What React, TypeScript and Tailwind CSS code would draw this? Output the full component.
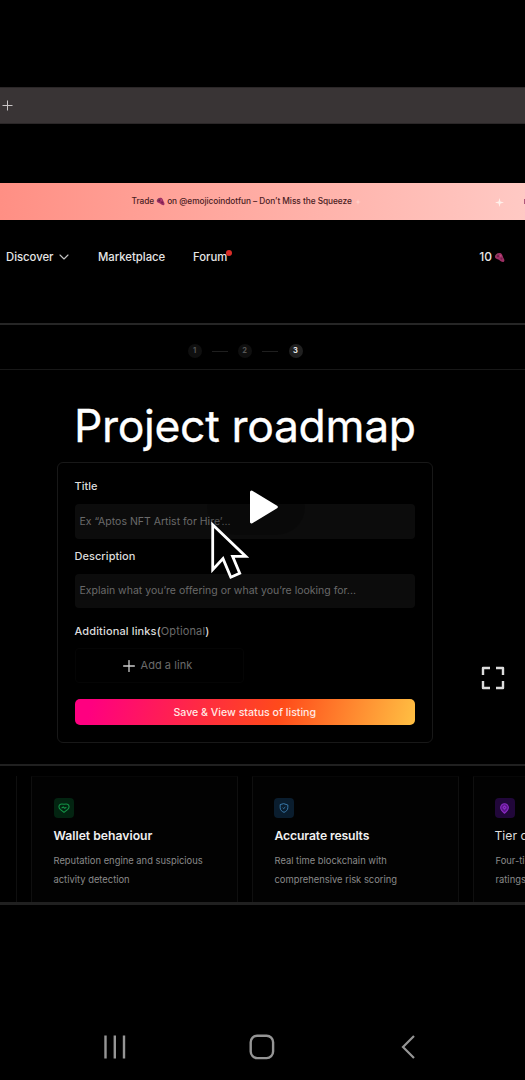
import React from "react";

function Berry({ className }: { className?: string }) {
  return (
    <svg viewBox="0 0 10 10" className={className} aria-hidden="true">
      <path d="M0.8 4.2 C1.5 1.5 4 0.3 6.3 1.2 C7.6 2 7.8 4 9 6.2 C10 8 9.3 9.2 8 9.1 C5.8 8.8 5.2 7 3.2 6.6 C1.8 6.3 0.8 5.5 0.8 4.2Z" fill="#9c2f63" />
      <circle cx="3.6" cy="3.8" r="1" fill="#6e1b48" />
      <circle cx="6" cy="3.4" r="0.9" fill="#c0487f" />
      <circle cx="6.8" cy="6" r="1" fill="#771c4d" />
      <path d="M0.8 3.8 L2.2 2.4 L3.2 1 L3 3Z" fill="#665a52" />
    </svg>
  );
}

function Sparkle({ className }: { className?: string }) {
  return (
    <svg viewBox="0 0 10 10" className={className} aria-hidden="true">
      <path d="M5 0 L6 4 L10 5 L6 6 L5 10 L4 6 L0 5 L4 4Z" fill="#fff0ea" />
    </svg>
  );
}

function Step({ n, active }: { n: number; active?: boolean }) {
  return (
    <span
      className={
        active
          ? "flex h-[14px] w-[14px] shrink-0 items-center justify-center rounded-full bg-[#202020] text-[7.5px] font-bold text-[#e5e5e5]"
          : "flex h-[14px] w-[14px] shrink-0 items-center justify-center rounded-full bg-[#0f0f0f] text-[7.5px] font-bold text-[#555555]"
      }
    >
      {n}
    </span>
  );
}

function HeartIcon() {
  return (
    <svg viewBox="0 0 12 12" className="h-3 w-3" fill="none" stroke="#149447" strokeWidth="1.1" strokeLinejoin="round" strokeLinecap="round">
      <path d="M6 10.4 L2.2 7.4 C0.4 5.9 0.5 3 2.5 2.2 C3.3 1.8 4.3 1.9 6 2.2 C7.7 1.9 8.7 1.8 9.5 2.2 C11.5 3 11.6 5.9 9.8 7.4Z" />
      <path d="M4 5.8 L5.3 5 L6.7 6.3 L8 5.6" />
    </svg>
  );
}

function ShieldIcon() {
  return (
    <svg viewBox="0 0 12 12" className="h-[10px] w-[10px]" fill="none" stroke="#3978a8" strokeWidth="1.2" strokeLinejoin="round" strokeLinecap="round">
      <path d="M6 0.9 L10.6 2.4 V5.6 C10.6 8.3 8.5 10.3 6 11.2 C3.5 10.3 1.4 8.3 1.4 5.6 V2.4Z" />
      <path d="M4.8 6 L5.6 6.7 L7.2 5.2" />
    </svg>
  );
}

function PinIcon() {
  return (
    <svg viewBox="0 0 12 12" className="h-[11px] w-[11px]" fill="none" stroke="#8a2bc2" strokeWidth="1.2" strokeLinejoin="round">
      <path d="M6 11.2 C3.6 9.3 1.8 7.4 1.8 5 A4.2 4.2 0 0 1 10.2 5 C10.2 7.4 8.4 9.3 6 11.2Z" fill="#5b168a" />
      <path d="M6 3.2 L7.6 4.8 L6 6.8 L4.4 4.8Z" />
    </svg>
  );
}

type FeatureProps = {
  icon: React.ReactNode;
  iconClass: string;
  title: string;
  titleClass: string;
  lines: [string, string];
};

function Feature({ icon, iconClass, title, titleClass, lines }: FeatureProps) {
  return (
    <article className="flex h-[126px] w-[207px] shrink-0 flex-col border border-b-0 border-[#0f0f0f] border-t-[#070707] bg-[#020202] pt-[21px] pl-[21.5px]">
      <div className={iconClass}>{icon}</div>
      <h3 className={titleClass}>{title}</h3>
      <p className="flex flex-col items-start pt-[5px] text-[9.4px] leading-[19px] whitespace-nowrap text-[#8a8a8a]">
        <span>{lines[0]}</span>
        <span>{lines[1]}</span>
      </p>
    </article>
  );
}

export default function App() {
  return (
    <div className="flex h-[1080px] w-[525px] flex-col overflow-hidden bg-black font-['Inter',sans-serif] text-white">
      <div className="h-[87px] shrink-0" />
      <div className="flex h-[37px] shrink-0 items-center border-y border-[#2b2728] bg-[#393435] pl-[2px]">
        <svg viewBox="0 0 11 11" className="h-[11px] w-[11px]" stroke="#c9c5c6" strokeWidth="1">
          <path d="M5.5 0.5 V10.5 M0.5 5.5 H10.5" />
        </svg>
      </div>
      <div className="h-[59px] shrink-0" />

      <div className="flex h-[37px] shrink-0 items-center bg-linear-to-r from-[#ff8f84] to-[#ffc9c4] text-[8.3px] font-medium tracking-[-0.005em] text-[#4b2023]">
        <div className="flex w-full items-center pl-[131.5px] whitespace-nowrap">
          <span>Trade</span>
          <Berry className="ml-[2px] h-[9px] w-[9px]" />
          <span className="ml-[2px]">on @emojicoindotfun – Don’t Miss the Squeeze</span>
          <Sparkle className="ml-[3px] h-[6px] w-[6px] opacity-50" />
          <Sparkle className="mt-[1px] mr-[20px] ml-auto h-[9px] w-[9px]" />
          <span className="h-[5px] w-[1px] bg-[#b0567a]" />
        </div>
      </div>

      <nav className="flex h-[103px] shrink-0 items-start pt-[29px] pl-[6px] text-[11.3px] leading-[16px] font-medium text-[#e6e6e6]">
        <span className="w-[48px]">Discover</span>
        <svg viewBox="0 0 10 6" className="mt-[5px] ml-[5px] h-[6px] w-[10px]" fill="none" stroke="#c4c4c4" strokeWidth="1.1" strokeLinecap="round" strokeLinejoin="round">
          <path d="M1 1 L5 5 L9 1" />
        </svg>
        <span className="ml-[29px] w-[95px]">Marketplace</span>
        <span className="w-[34px]">Forum</span>
        <span className="mt-[1px] -ml-px h-[6px] w-[6px] rounded-full bg-[#d92d28]" />
        <span className="mr-[2px] ml-auto text-[12px]">10</span>
        <Berry className="mt-[3px] mr-[20px] h-[11px] w-[11px]" />
      </nav>

      <div className="flex h-[47px] shrink-0 items-center border-t-2 border-b border-t-[#262626] border-b-[#181818] pt-[8px] pl-[187.5px]">
        <Step n={1} />
        <span className="mr-[10px] ml-[10px] h-px w-[16px] shrink-0 bg-[#1f1f1f]" />
        <Step n={2} />
        <span className="mr-[11px] ml-[10px] h-px w-[16px] shrink-0 bg-[#1f1f1f]" />
        <Step n={3} active />
      </div>

      <main className="flex h-[394px] shrink-0 flex-col">
        <h1 className="pt-[29px] pl-[74px] text-[44.5px] leading-[54px] font-normal tracking-[-0.35px] whitespace-nowrap [-webkit-text-stroke:0.3px_white]">Project roadmap</h1>
        <div className="mt-[9px] flex">
          <form className="relative ml-[57px] flex h-[281px] w-[376px] flex-col rounded-[6px] border border-[#181818] pr-[17px] pl-[16.5px] text-[11px]">
            <label className="pt-[15px] leading-[16px] font-medium text-[#dcdcdc]">Title</label>
            <div className="mt-[10px] flex h-[35px] items-center rounded-[4px] bg-[#0c0c0c] pl-[5px] text-[10.5px] whitespace-nowrap text-[#6a6a6a]">
              Ex “Aptos NFT Artist for Hire’...
            </div>
            <label className="pt-[9px] leading-[16px] font-medium tracking-[0.05px] text-[#dcdcdc]">Description</label>
            <div className="mt-[10px] flex h-[34px] items-center rounded-[4px] bg-[#0c0c0c] pl-[5px] text-[10.5px] whitespace-nowrap text-[#6a6a6a]">
              Explain what you’re offering or what you’re looking for...
            </div>
            <label className="pt-[15px] leading-[16px] font-medium tracking-[0.13px] whitespace-nowrap text-[#dcdcdc]">
              Additional links(<span className="font-normal text-[#6a6a6a]">Optional</span>)
            </label>
            <div className="mt-[9px] flex h-[35px] w-[169px] items-center rounded-[4px] border border-[#050505] pl-[47px] text-[#6a6a6a]">
              <svg viewBox="0 0 12 12" className="h-3 w-3" stroke="#cccccc" strokeWidth="1.3" strokeLinecap="round">
                <path d="M6 0.6 V11.4 M0.6 6 H11.4" />
              </svg>
              <span className="ml-[6px] tracking-[0.05px]">Add a link</span>
            </div>
            <button type="button" className="mt-[16px] flex h-[26px] w-[340.5px] items-center justify-center rounded-[5px] bg-[linear-gradient(105deg,#ff0080_5%,#ff2f3c_40%,#ff4b1a_60%,#ffc043_100%)] pt-px text-[10.6px] font-medium whitespace-nowrap text-[#ffe9e4]">
              Save &amp; View status of listing
            </button>

            <div className="absolute top-[16px] left-[149px] h-[56px] w-[98px] rounded-full bg-black/20" />
            <svg viewBox="0 0 30 36" className="absolute top-[26px] left-[191px] h-[36px] w-[30px]">
              <path d="M2.5 3 L27.3 18 L2.5 33Z" fill="white" stroke="white" strokeWidth="3" strokeLinejoin="round" />
            </svg>
            <svg viewBox="0 0 40 60" className="absolute top-[57px] left-[150.5px] h-[60px] w-[40px]" fill="black" stroke="white" strokeWidth="2.8">
              <path d="M3.7 4.8 L3.7 49.6 L14 38.6 L21.8 57.2 L30.7 53.2 L23.6 36.4 L36.8 36.4Z" />
            </svg>
          </form>
          <svg viewBox="0 0 24 24" className="mt-[204px] ml-[47.5px] h-[24px] w-[24px]" fill="none" stroke="#dcdcdc" strokeWidth="2.4" strokeLinejoin="round">
            <path d="M2 9 V2 H9 M15 2 H22 V9 M22 15 V22 H15 M9 22 H2 V15" />
          </svg>
        </div>
      </main>

      <section className="flex h-[141px] shrink-0 items-end gap-[14px] overflow-hidden border-t-2 border-b-[3px] border-[#202020]">
        <div className="h-[126px] w-[17px] shrink-0 border-r border-[#0f0f0f]" />
        <Feature
          icon={<HeartIcon />}
          iconClass="flex h-[20px] w-[20px] shrink-0 items-center justify-center rounded-[4px] bg-[#032411]"
          title="Wallet behaviour"
          titleClass="pt-[8px] text-[12.2px] leading-[20px] font-semibold whitespace-nowrap text-[#f0f0f0]"
          lines={["Reputation engine and suspicious", "activity detection"]}
        />
        <Feature
          icon={<ShieldIcon />}
          iconClass="-ml-px flex h-[20px] w-[20px] shrink-0 items-center justify-center rounded-[4px] bg-[#0a1d2e]"
          title="Accurate results"
          titleClass="pt-[8px] text-[12.2px] leading-[20px] font-semibold tracking-[-0.01em] whitespace-nowrap text-[#f0f0f0]"
          lines={["Real time blockchain with", "comprehensive risk scoring"]}
        />
        <Feature
          icon={<PinIcon />}
          iconClass="-ml-px flex h-[20px] w-[20px] shrink-0 items-center justify-center rounded-[4px] bg-[#21073a]"
          title="Tier classification"
          titleClass="-ml-px pt-[8px] text-[12.2px] leading-[20px] font-normal whitespace-nowrap text-[#dedede]"
          lines={["Four-tier wallet", "ratings"]}
        />
      </section>

      <footer className="mt-auto flex h-[66px] shrink-0 items-center pl-[103px]">
        <svg viewBox="0 0 24 24" className="h-[24px] w-[24px]" stroke="#959595" strokeWidth="2.4">
          <path d="M2.5 0.5 V23.5 M11.8 0.5 V23.5 M21 0.5 V23.5" />
        </svg>
        <svg viewBox="0 0 26 26" className="ml-[121.5px] h-[26px] w-[26px]" fill="none" stroke="#959595" strokeWidth="2.4">
          <rect x="1.7" y="1.7" width="22.4" height="22.4" rx="6.5" />
        </svg>
        <svg viewBox="0 0 16 24" className="ml-[126px] h-[24px] w-[16px]" fill="none" stroke="#959595" strokeWidth="2.2">
          <path d="M13 1 L2 12 L13 23" />
        </svg>
      </footer>
    </div>
  );
}
